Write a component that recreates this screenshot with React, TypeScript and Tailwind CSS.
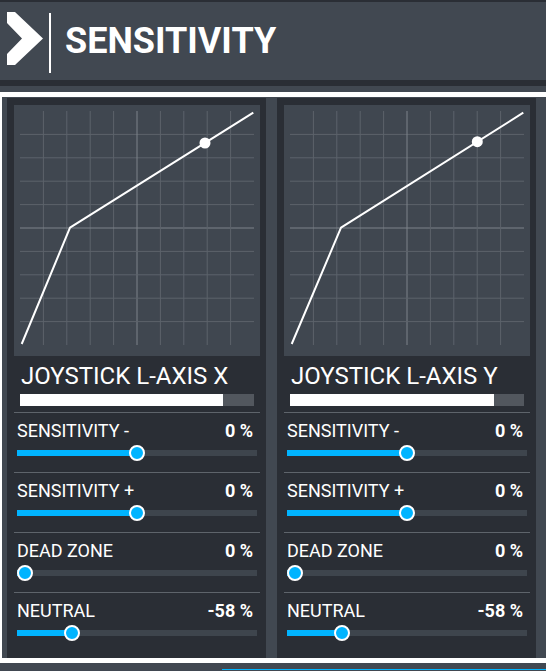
import React from "react";

function Graph({ knee, dot }: { knee: number; dot: number }) {
  const o = 6;
  const s = 234;
  const step = s / 10;
  const lines = [];
  for (let i = 1; i < 10; i++) {
    const p = o + step * i;
    const c = i === 5 ? "#7d838a" : "#5c636b";
    lines.push(<line key={"v" + i} x1={p} y1={o} x2={p} y2={o + s} stroke={c} strokeWidth={1} />);
    lines.push(<line key={"h" + i} x1={o} y1={p} x2={o + s} y2={p} stroke={c} strokeWidth={1} />);
  }
  const slope = (7.7 - 122.7) / (239.3 - knee);
  const dy = 122.7 + slope * (dot - knee);
  return (
    <div className="w-[246px] h-[251px] bg-[#404750]">
      <svg width="246" height="251" viewBox="0 0 246 251">
        {lines}
        <polyline
          points={`7.7,239 ${knee},122.7 239.3,7.7`}
          fill="none"
          stroke="#ffffff"
          strokeWidth={2}
          strokeLinejoin="round"
        />
        <circle cx={dot} cy={dy} r={5.5} fill="#ffffff" />
      </svg>
    </div>
  );
}

function SliderRow({ label, value, pct }: { label: string; value: string; pct: number }) {
  const knobLeft = pct * (240 - 16);
  return (
    <div className="border-t border-[#5e646b] px-[3px] pt-[7px] pb-[16px]">
      <div className="flex justify-between pr-[4px] text-[18px] leading-[21px] text-white">
        <span className="font-normal">{label}</span>
        <span className="font-bold">{value}</span>
      </div>
      <div className="relative mt-[9px] h-[6px] w-[240px] bg-[#3e454d]">
        <div className="absolute left-0 top-0 h-[6px] bg-[#00b4ff]" style={{ width: knobLeft + 8 }} />
        <div
          className="absolute top-[-5px] h-[16px] w-[16px] rounded-full border-2 border-white bg-[#00b4ff]"
          style={{ left: knobLeft }}
        />
      </div>
    </div>
  );
}

function Panel({ title, fill, knee, dot }: { title: string; fill: number; knee: number; dot: number }) {
  return (
    <div className="w-[259px] shrink-0 bg-[#2a2e35] pl-[7px] pr-[6px] pt-[7px]">
      <Graph knee={knee} dot={dot} />
      <div className="mt-[6px] pl-[7px] text-[24px] leading-[28px] text-white">{title}</div>
      <div className="mt-[4px] ml-[6px] flex h-[12px] w-[234px] bg-[#52575e]">
        <div className="h-full bg-white" style={{ width: `${fill * 100}%` }} />
      </div>
      <div className="mt-[6px]">
        <SliderRow label="SENSITIVITY -" value="0 %" pct={0.5} />
        <SliderRow label="SENSITIVITY +" value="0 %" pct={0.5} />
        <SliderRow label="DEAD ZONE" value="0 %" pct={0} />
        <SliderRow label="NEUTRAL" value="-58 %" pct={0.21} />
      </div>
    </div>
  );
}

export default function App() {
  return (
    <div
      className="relative h-[671px] w-[546px] overflow-hidden bg-[#414851]"
      style={{ fontFamily: "Roboto, 'Noto Sans', sans-serif" }}
    >
      <div className="h-[2px] bg-[#2a2e35]" />
      <header className="flex h-[78px] items-center">
        <svg width="50" height="78" viewBox="0 2 50 78" className="shrink-0">
          <path d="M7 12 L15 12 L43 38.5 L15 65 L7 65 L7 54 L22 38.5 L7 23 Z" fill="#ffffff" />
        </svg>
        <div className="h-[60px] w-[2px] shrink-0 bg-white -ml-[1px] mt-[3px]" />
        <h1 className="ml-[14px] text-[36px] font-bold leading-none text-white">SENSITIVITY</h1>
      </header>
      <div className="h-[6px] bg-[#2a2e35]" />
      <div className="h-[6px]" />
      <div className="h-[571px] w-[600px] border-l-2 border-t-[5px] border-b-[5px] border-white bg-[#414851]">
        <div className="flex h-full gap-[11px] overflow-hidden pl-[5px] pt-[1px]">
          <Panel title="JOYSTICK L-AXIS X" fill={0.866} knee={56} dot={191} />
          <Panel title="JOYSTICK L-AXIS Y" fill={0.872} knee={57} dot={193.3} />
        </div>
      </div>
      <div className="ml-[222px] mt-[6px] h-[1px] bg-[#00b4ff]" />
    </div>
  );
}
